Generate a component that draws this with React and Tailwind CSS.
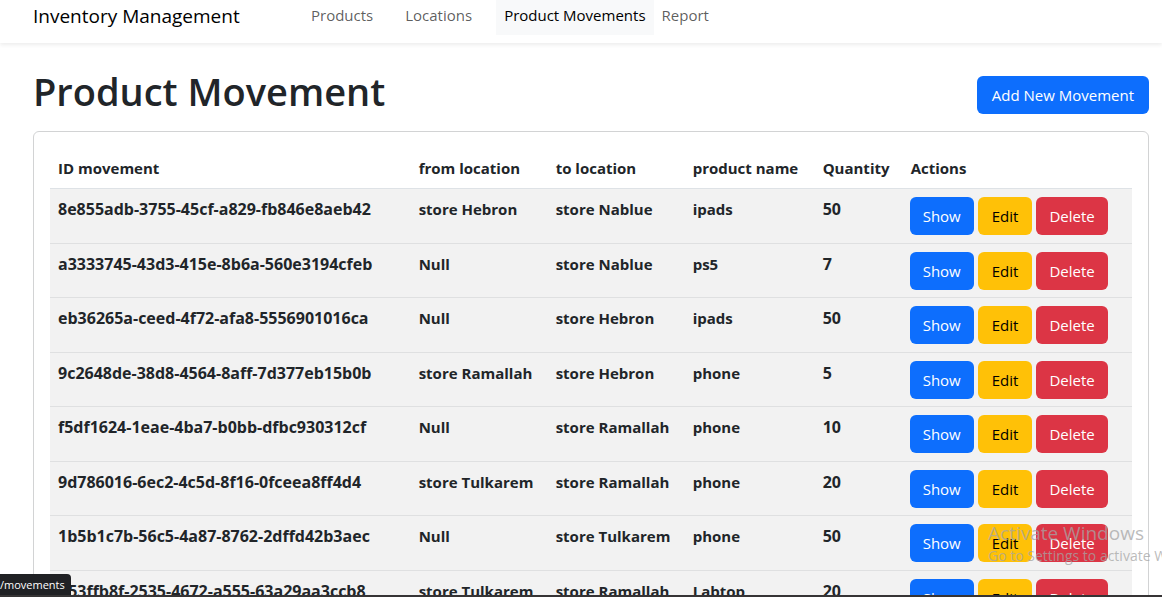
const navLinks = [
  { label: "Products", className: "mr-4 text-black/65" },
  { label: "Locations", className: "mr-4 text-black/65" },
  { label: "Product Movements", className: "bg-[#f8f9fa] text-black", active: true },
  { label: "Report", className: "text-black/65" },
];

const movements = [
  ["8e855adb-3755-45cf-a829-fb846e8aeb42", "store Hebron", "store Nablue", "ipads", 50],
  ["a3333745-43d3-415e-8b6a-560e3194cfeb", "Null", "store Nablue", "ps5", 7],
  ["eb36265a-ceed-4f72-afa8-5556901016ca", "Null", "store Hebron", "ipads", 50],
  ["9c2648de-38d8-4564-8aff-7d377eb15b0b", "store Ramallah", "store Hebron", "phone", 5],
  ["f5df1624-1eae-4ba7-b0bb-dfbc930312cf", "Null", "store Ramallah", "phone", 10],
  ["9d786016-6ec2-4c5d-8f16-0fceea8ff4d4", "store Tulkarem", "store Ramallah", "phone", 20],
  ["1b5b1c7b-56c5-4a87-8762-2dffd42b3aec", "Null", "store Tulkarem", "phone", 50],
  ["b53ffb8f-2535-4672-a555-63a29aa3ccb8", "store Tulkarem", "store Ramallah", "Labtop", 20],
];

const headings = ["ID movement", "from location", "to location", "product name", "Quantity", "Actions"];

function Button({ className, children }) {
  return (
    <button type="button" className={`h-[38px] cursor-pointer rounded-md whitespace-nowrap ${className}`}>
      {children}
    </button>
  );
}

function Navbar() {
  return (
    <nav className="flex items-start bg-white pb-2 pl-[33px] shadow-[0_2px_4px_rgba(0,0,0,0.075)]">
      <a href="#" className="w-[270px] shrink-0 pt-px text-[19px] leading-[30px] text-black">
        Inventory Management
      </a>
      <ul className="flex">
        {navLinks.map((link) => (
          <li key={link.label}>
            <a
              href="#"
              aria-current={link.active ? "page" : undefined}
              className={`block px-2 pt-[3px] pb-2 whitespace-nowrap ${link.className}`}
            >
              {link.label}
            </a>
          </li>
        ))}
      </ul>
    </nav>
  );
}

function MovementTable() {
  return (
    <table className="w-full table-fixed border-collapse text-left font-bold">
      <colgroup>
        <col className="w-1/3" />
        <col className="w-[137px]" />
        <col className="w-[137px]" />
        <col className="w-[130px]" />
        <col className="w-[88px]" />
        <col />
      </colgroup>
      <thead>
        <tr className="border-b border-[#dee2e6]">
          {headings.map((heading) => (
            <th key={heading} scope="col" className="p-2 whitespace-nowrap">
              {heading}
            </th>
          ))}
        </tr>
      </thead>
      <tbody>
        {movements.map(([id, from, to, product, quantity]) => (
          <tr key={id} className="border-b border-[#dfe0e1] bg-[#f2f2f2] align-top odd:h-[55px] even:h-[54px]">
            <th scope="row" className="px-2 pt-2 text-base leading-6 whitespace-nowrap">{id}</th>
            <td className="px-2 pt-2 whitespace-nowrap">{from}</td>
            <td className="px-2 pt-2 whitespace-nowrap">{to}</td>
            <td className="px-2 pt-2 whitespace-nowrap">{product}</td>
            <td className="px-2 pt-2 text-base leading-6">{quantity}</td>
            <td className="pt-2 pl-[7px] font-normal">
              <div className="flex gap-1">
                <Button className="bg-[#0d6efd] px-[13px] text-white">Show</Button>
                <Button className="bg-[#ffc107] px-3.5 text-black">Edit</Button>
                <Button className="bg-[#dc3545] px-[13px] text-white">Delete</Button>
              </div>
            </td>
          </tr>
        ))}
      </tbody>
    </table>
  );
}

export default function App() {
  return (
    <div className="relative flex h-screen flex-col overflow-hidden bg-white font-['Segoe_UI','Open_Sans',sans-serif] text-[15px] leading-6 text-[#212529]">
      <div className="min-h-0 flex-1 overflow-hidden">
        <Navbar />
        <main className="pt-[26px] pr-[13px] pl-[33px]">
          <header className="flex items-end justify-between pb-[17px]">
            <h1 className="text-[38px] leading-[45px] font-semibold">Product Movement</h1>
            <Button className="bg-[#0d6efd] px-[15px] text-white">Add New Movement</Button>
          </header>
          <section className="rounded-md border border-[#d2d3d4] p-4">
            <MovementTable />
          </section>
        </main>
      </div>
      <div className="h-0.5 shrink-0 bg-[#363435]" />
      <div className="absolute bottom-0.5 left-0 h-[21px] rounded-tr bg-[#202124] pr-1.5 text-[11px] leading-[21px] text-white">
        /movements
      </div>
      <div className="pointer-events-none absolute top-[520px] left-[988px] whitespace-nowrap text-[#a5a5a5]/75">
        <p className="text-[19px] leading-[26px]">Activate Windows</p>
        <p className="text-sm leading-5">Go to Settings to activate Windows.</p>
      </div>
    </div>
  );
}
